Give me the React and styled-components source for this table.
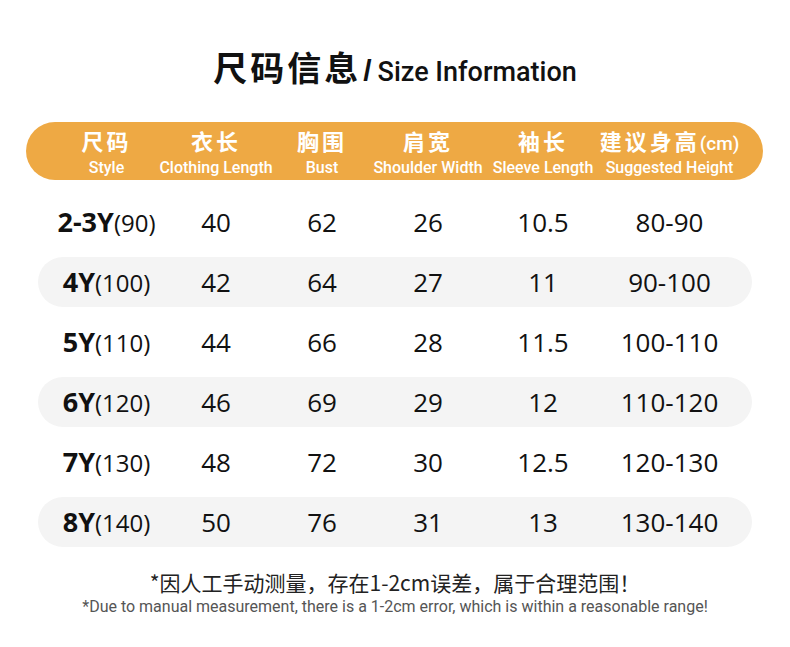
import React from 'react';
import styled, { createGlobalStyle } from 'styled-components';

const GlobalStyle = createGlobalStyle`
  body {
    margin: 0;
    background: #fff;
    font-family: "Open Sans", "Noto Sans CJK SC", sans-serif;
  }
`;

const Page = styled.div`
  width: 790px;
  height: 647px;
  background: #fff;
  display: flex;
  flex-direction: column;
  align-items: flex-start;
  overflow: hidden;
`;

const Title = styled.h1`
  margin: 43px 0 0;
  align-self: center;
  display: flex;
  align-items: baseline;
  color: #111;
  font-weight: normal;
  line-height: 48px;
`;

const TitleCn = styled.span`
  font-family: "Noto Sans CJK SC", sans-serif;
  font-weight: 700;
  font-size: 34px;
  letter-spacing: 3px;
`;

const Slash = styled.span`
  font-family: "Liberation Sans", sans-serif;
  font-weight: 700;
  font-size: 30px;
  margin: 0 6px 0 2px;
`;

const TitleEn = styled.span`
  font-family: "Roboto", sans-serif;
  font-size: 27px;
  font-weight: 500;
`;

const Header = styled.div`
  margin: 26px 0 0 26px;
  width: 737px;
  height: 58px;
  box-sizing: border-box;
  padding: 0 28px 0 25px;
  border-radius: 29px;
  background: #eea944;
  display: grid;
  grid-template-columns: 111px 108px 104px 108px 122px 131px;
  align-items: start;
  color: #fff;
`;

const HeadCell = styled.div`
  padding-top: 5px;
  display: flex;
  flex-direction: column;
  align-items: center;
  white-space: nowrap;
`;

const HeadCn = styled.span`
  font-family: "Noto Sans CJK SC", sans-serif;
  font-weight: 700;
  font-size: 22px;
  line-height: 26px;
  height: 26px;
  letter-spacing: 3px;

  small {
    font-family: "Roboto", sans-serif;
    font-size: 19px;
    line-height: 1;
    letter-spacing: 0;
    font-weight: 500;
  }
`;

const HeadEn = styled.span`
  margin-top: 6px;
  font-family: "Roboto", sans-serif;
  font-size: 16px;
  line-height: 18px;
  font-weight: 500;
`;

const Rows = styled.div`
  margin: 17px 0 0 38px;
  display: flex;
  flex-direction: column;
  gap: 10px;
`;

const Row = styled.div`
  width: 714px;
  height: 50px;
  box-sizing: border-box;
  padding: 0 17px 0 13px;
  border-radius: 25px;
  background: ${(p) => (p.$shaded ? '#f4f4f4' : 'transparent')};
  display: grid;
  grid-template-columns: 111px 108px 104px 108px 122px 131px;
  align-items: center;
`;

const Cell = styled.div`
  text-align: center;
  font-size: 26px;
  color: #111;
  white-space: nowrap;
  line-height: 30px;
`;

const SizeCell = styled(Cell)`
  b {
    font-size: 27px;
    font-weight: 700;
  }
  span {
    font-size: 24px;
  }
`;

const Note = styled.div`
  align-self: center;
  margin-top: 21px;
  display: flex;
  flex-direction: column;
  align-items: center;
  color: #222;
`;

const NoteCn = styled.div`
  font-family: "Noto Sans CJK SC", sans-serif;
  font-size: 21px;
  line-height: 28px;
`;

const NoteEn = styled.div`
  font-family: "Roboto", sans-serif;
  font-size: 16px;
  line-height: 22px;
  color: #555;
`;

const columns = [
  { cn: '尺码', en: 'Style' },
  { cn: '衣长', en: 'Clothing Length' },
  { cn: '胸围', en: 'Bust' },
  { cn: '肩宽', en: 'Shoulder Width' },
  { cn: '袖长', en: 'Sleeve Length' },
  { cn: '建议身高', unit: '(cm)', en: 'Suggested Height' },
];

const data = [
  ['2-3Y', '(90)', '40', '62', '26', '10.5', '80-90'],
  ['4Y', '(100)', '42', '64', '27', '11', '90-100'],
  ['5Y', '(110)', '44', '66', '28', '11.5', '100-110'],
  ['6Y', '(120)', '46', '69', '29', '12', '110-120'],
  ['7Y', '(130)', '48', '72', '30', '12.5', '120-130'],
  ['8Y', '(140)', '50', '76', '31', '13', '130-140'],
];

export default function App() {
  return (
    <Page>
      <GlobalStyle />
      <Title>
        <TitleCn>尺码信息</TitleCn>
        <Slash>/</Slash>
        <TitleEn>Size Information</TitleEn>
      </Title>

      <Header>
        {columns.map((c) => (
          <HeadCell key={c.en}>
            <HeadCn>
              {c.cn}
              {c.unit && <small>{c.unit}</small>}
            </HeadCn>
            <HeadEn>{c.en}</HeadEn>
          </HeadCell>
        ))}
      </Header>

      <Rows>
        {data.map(([size, height, ...rest], i) => (
          <Row key={size} $shaded={i % 2 === 1}>
            <SizeCell>
              <b>{size}</b>
              <span>{height}</span>
            </SizeCell>
            {rest.map((v, j) => (
              <Cell key={j}>{v}</Cell>
            ))}
          </Row>
        ))}
      </Rows>

      <Note>
        <NoteCn>*因人工手动测量，存在1-2cm误差，属于合理范围！</NoteCn>
        <NoteEn>*Due to manual measurement, there is a 1-2cm error, which is within a reasonable range!</NoteEn>
      </Note>
    </Page>
  );
}
